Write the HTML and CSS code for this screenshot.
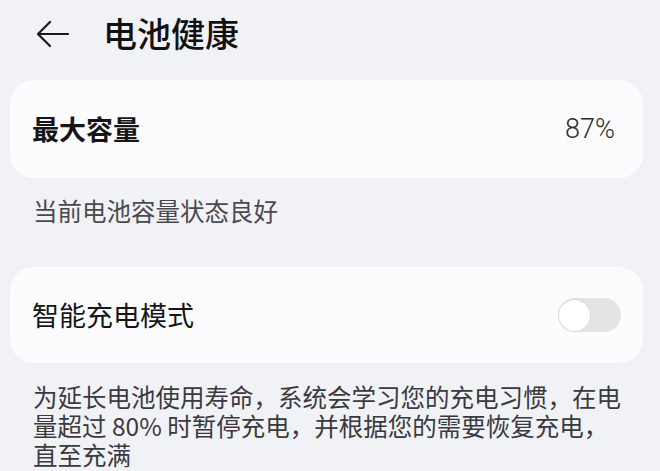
FILE: index.html
```html
<!DOCTYPE html>
<html lang="zh-CN">
<head>
<meta charset="utf-8">
<link rel="stylesheet" href="styles.css">
</head>
<body>
<div class="page">
  <header class="header">
    <svg class="back" width="34" height="30" viewBox="0 0 34 30">
      <path d="M33 15 H3 M15 3 L3 15 L15 27" fill="none" stroke="#1a1a1a" stroke-width="2.2" stroke-linecap="round" stroke-linejoin="round"/>
    </svg>
    <h1 class="title">电池健康</h1>
  </header>
  <section class="card">
    <span class="label bold">最大容量</span>
    <span class="value">87%</span>
  </section>
  <p class="note">当前电池容量状态良好</p>
  <section class="card card2">
    <span class="label">智能充电模式</span>
    <span class="switch"><span class="knob"></span></span>
  </section>
  <p class="desc">为延长电池使用寿命，系统会学习您的充电习惯，在电<br>量超过 80% 时暂停充电，并根据您的需要恢复充电，<br>直至充满</p>
</div>
</body>
</html>
```
FILE: styles.css
```css
html, body {
  margin: 0;
  padding: 0;
  background: #f1f2f6;
}
.page {
  width: 660px;
  height: 471px;
  overflow: hidden;
  font-family: "Noto Sans CJK SC", "Noto Sans", sans-serif;
  color: #151515;
}
.header {
  height: 66px;
  display: flex;
  align-items: center;
  padding-left: 35px;
  gap: 34px;
}
.back {
  display: block;
  margin-top: 2px;
}
.title {
  margin: 0;
  font-size: 34px;
  font-weight: 500;
  line-height: 40px;
  color: #111;
}
.card {
  margin: 14px 17px 0 10px;
  height: 98px;
  background: #fcfcfe;
  border-radius: 24px;
  display: flex;
  align-items: center;
  justify-content: space-between;
  padding: 0 28px 0 22px;
}
.label {
  font-size: 27px;
  line-height: 32px;
  color: #161616;
}
.label.bold {
  font-weight: 700;
}
.value {
  font-family: "Roboto", "Noto Sans", sans-serif;
  font-weight: 300;
  font-size: 27px;
  color: #2a2a2a;
}
.note {
  margin: 19px 0 0 33px;
  font-size: 24.5px;
  line-height: 28px;
  color: #4a4a4e;
}
.card2 {
  margin-top: 42px;
  height: 96px;
  padding-right: 22px;
}
.switch {
  width: 63px;
  height: 34px;
  border-radius: 17px;
  background: #e4e4e7;
  display: flex;
  align-items: center;
  padding-left: 1px;
  box-sizing: border-box;
}
.knob {
  width: 31px;
  height: 31px;
  border-radius: 50%;
  background: #fff;
  box-shadow: 0 0 0 1px #dadadd;
}
.desc {
  margin: 19px 0 0 33px;
  font-size: 24.5px;
  line-height: 29px;
  color: #3a3a3e;
}
```
